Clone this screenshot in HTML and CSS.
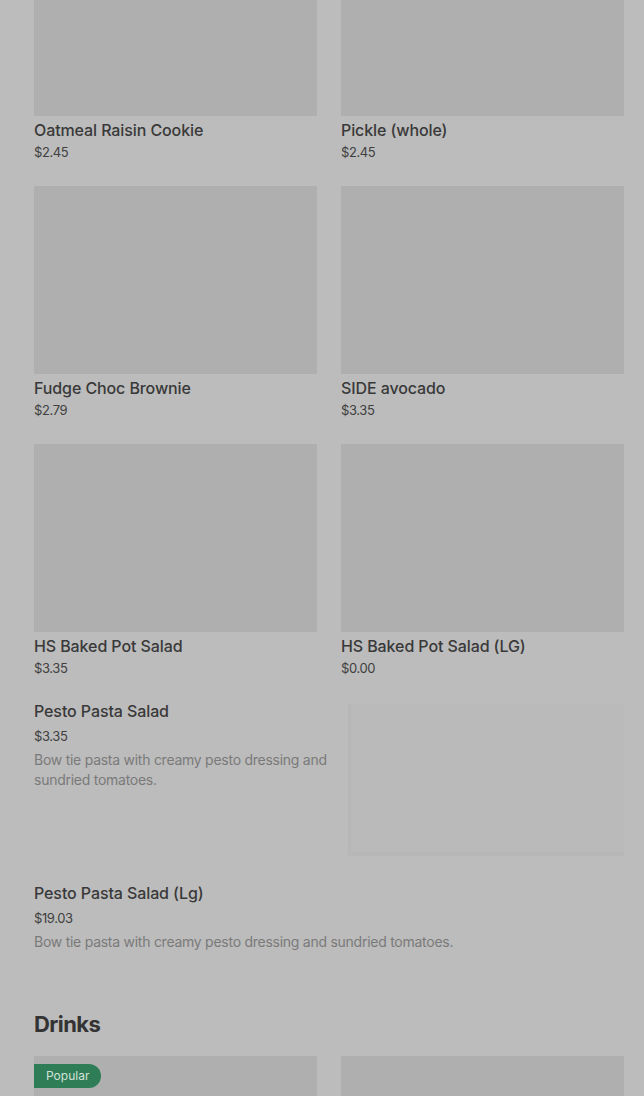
FILE: index.html
```html
<!DOCTYPE html>
<html>
<head>
<meta charset="utf-8">
<link rel="stylesheet" href="styles.css">
</head>
<body>
<main class="page">
  <section class="grid">
    <div class="card"><div class="thumb"></div><div class="name">Oatmeal Raisin Cookie</div><div class="price">$2.45</div></div>
    <div class="card"><div class="thumb"></div><div class="name">Pickle (whole)</div><div class="price">$2.45</div></div>
    <div class="card"><div class="thumb"></div><div class="name">Fudge Choc Brownie</div><div class="price">$2.79</div></div>
    <div class="card"><div class="thumb"></div><div class="name">SIDE avocado</div><div class="price">$3.35</div></div>
    <div class="card"><div class="thumb"></div><div class="name">HS Baked Pot Salad</div><div class="price">$3.35</div></div>
    <div class="card"><div class="thumb"></div><div class="name">HS Baked Pot Salad (LG)</div><div class="price">$0.00</div></div>
  </section>

  <section class="list">
    <div class="item">
      <div class="info">
        <div class="name">Pesto Pasta Salad</div>
        <div class="price lp">$3.35</div>
        <div class="desc">Bow tie pasta with creamy pesto dressing and sundried tomatoes.</div>
      </div>
      <div class="pic"></div>
    </div>
    <div class="item">
      <div class="info">
        <div class="name">Pesto Pasta Salad (Lg)</div>
        <div class="price lp">$19.03</div>
        <div class="desc">Bow tie pasta with creamy pesto dressing and sundried tomatoes.</div>
      </div>
    </div>
  </section>

  <h2 class="heading">Drinks</h2>
  <section class="grid">
    <div class="card"><div class="thumb"><span class="badge">Popular</span></div></div>
    <div class="card"><div class="thumb"></div></div>
  </section>
</main>
</body>
</html>
```
FILE: styles.css
```css
html, body {
  margin: 0;
  padding: 0;
  background: #bcbcbc;
  height: 1096px;
  overflow: hidden;
}
body {
  font-family: Inter, "Noto Sans", sans-serif;
  color: #3a3a3a;
}
.page {
  margin-top: -72px;
  padding: 0 20px 0 34px;
}
.grid {
  display: grid;
  grid-template-columns: 1fr 1fr;
  column-gap: 24px;
  row-gap: 24px;
}
.thumb {
  position: relative;
  height: 188px;
  background: #afafaf;
}
.name {
  font-size: 16px;
  font-weight: 500;
  line-height: 24px;
  margin-top: 2px;
  color: #393939;
  letter-spacing: -0.1px;
}
.price {
  font-size: 13px;
  line-height: 20px;
  color: #404040;
  letter-spacing: -0.4px;
}
.list {
  margin-top: 21px;
  display: flex;
  flex-direction: column;
  gap: 25px;
}
.item {
  display: flex;
  gap: 14px;
}
.item .name { margin-top: 0; }
.info { flex: 1; }
.lp { margin-top: 3px; }
.desc {
  margin-top: 4px;
  font-size: 14px;
  line-height: 20px;
  color: #7a7a7a;
  letter-spacing: -0.26px;
}
.pic {
  flex: 0 0 276px;
  height: 152px;
  margin-top: 5px;
  background: #bababa;
  border-left: 3px solid #b7b7b7;
  border-bottom: 4px solid #b7b7b7;
  box-sizing: border-box;
}
.heading {
  margin: 56px 0 16px;
  font-size: 22px;
  line-height: 32px;
  font-weight: 700;
  color: #333333;
  letter-spacing: -0.6px;
}
.badge {
  position: absolute;
  top: 8px;
  left: 0;
  height: 24px;
  line-height: 24px;
  padding: 0 12px;
  font-size: 12px;
  color: #d2e2d9;
  background: #2f7d57;
  border-radius: 0 12px 12px 0;
}
```
